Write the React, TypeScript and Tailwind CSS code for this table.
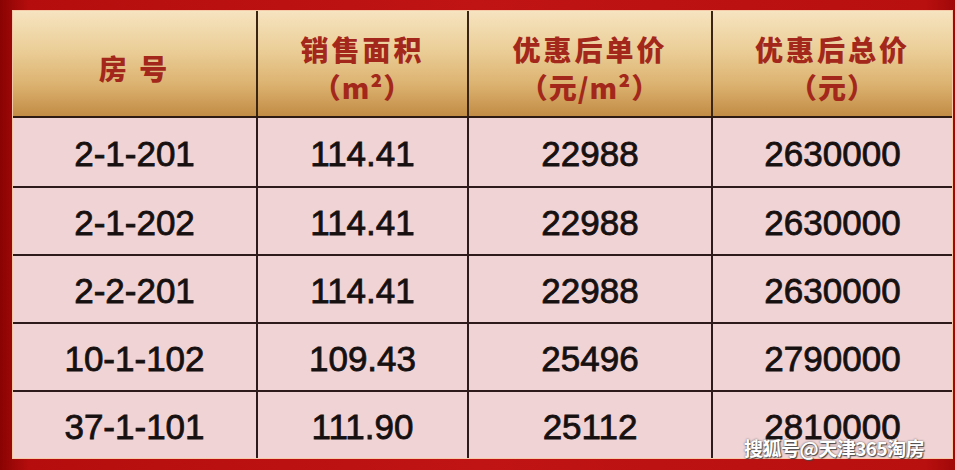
import React from "react";

const ROWS = [
  ["2-1-201", "114.41", "22988", "2630000"],
  ["2-1-202", "114.41", "22988", "2630000"],
  ["2-2-201", "114.41", "22988", "2630000"],
  ["10-1-102", "109.43", "25496", "2790000"],
  ["37-1-101", "111.90", "25112", "2810000"],
];

const cjk = "font-['Noto_Sans_CJK_SC',sans-serif]";
const num = "font-['Liberation_Sans',Arial,sans-serif]";

function Head({ top, sub, first }: { top: string; sub?: string; first?: boolean }) {
  return (
    <div
      className={`flex flex-col items-center justify-center pt-2 text-[28px] leading-[38px] font-black tracking-[3px] text-[#a3281b] ${cjk} ${
        first ? "" : "border-l-2 border-[#3a2412]"
      }`}
    >
      <span>{top}</span>
      {sub && <span className="tracking-[1px]">{sub}</span>}
    </div>
  );
}

export default function App() {
  return (
    <div className="w-[955px] h-[470px] overflow-hidden relative bg-[linear-gradient(90deg,#8a0303_0%,#b50d0d_3%,#c01414_50%,#b80f0f_97%,#a00808_100%)] pl-[12px] pt-[10px]">
      <div className="w-[941px] border border-[#f7c9a8] bg-[#efd3d5]">
        <div className="grid grid-cols-[243px_211px_244px_241px] h-[107px] bg-[linear-gradient(180deg,#f6e3c0_0%,#ecd09a_35%,#dcb270_70%,#c28c45_100%)] border-b-2 border-[#2e1a12]">
          <Head top="房 号" first />
          <Head top="销售面积" sub="（m²）" />
          <Head top="优惠后单价" sub="（元/m²）" />
          <Head top="优惠后总价" sub="（元）" />
        </div>
        {ROWS.map((r, i) => (
          <div
            key={i}
            className={`grid grid-cols-[243px_211px_244px_241px] h-[68px] ${i > 0 ? "border-t-2 border-[#2e1a1a]" : ""}`}
          >
            {r.map((c, j) => (
              <div
                key={j}
                className={`flex items-center justify-center pt-1 text-[35px] text-[#161010] [-webkit-text-stroke:0.8px_#161010] ${num} ${
                  j > 0 ? "border-l-2 border-[#2e1a1a]" : ""
                }`}
              >
                {c}
              </div>
            ))}
          </div>
        ))}
      </div>
      <div
        className={`absolute left-[744px] top-[434px] text-[19px] font-bold tracking-[-0.5px] text-white ${cjk} [text-shadow:0_0_2px_#555,1px_1px_1px_#444]`}
      >
        搜狐号@天津365淘房
      </div>
    </div>
  );
}
